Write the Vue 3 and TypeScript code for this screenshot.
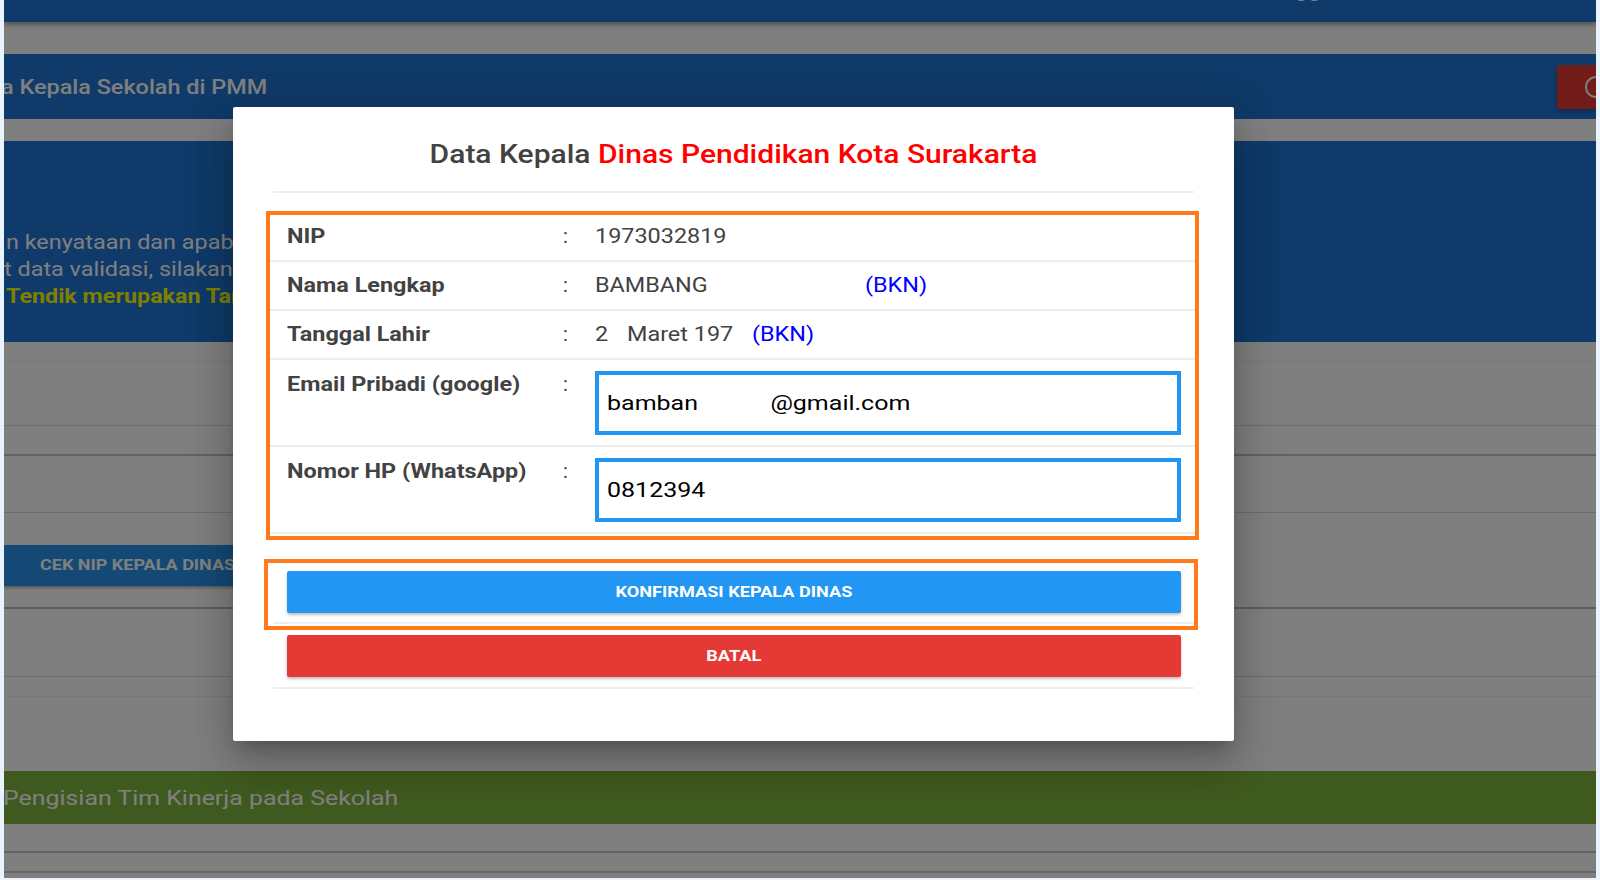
<script setup lang="ts">
import { ref } from 'vue'

const email = ref('bamban\u00a0\u00a0\u00a0\u00a0\u00a0\u00a0\u00a0\u00a0\u00a0\u00a0\u00a0\u2006@gmail.com')
const phone = ref('0812394')
</script>

<template>
  <div class="frame">
    <div class="page">
      <header class="topbar"><span class="topbar-text">gg</span></header>
      <section class="bar title-bar">
        <h2 class="bar-title">a Kepala Sekolah di PMM</h2>
        <button class="help-btn" type="button">
          <svg width="24" height="24" viewBox="0 0 24 24" fill="none" stroke="#fff" stroke-width="2">
            <path d="M15 2.5A10 10 0 1 0 22 12" />
            <path d="M12 7a4 4 0 0 1 3 6.5L12 16" />
          </svg>
        </button>
      </section>
      <section class="bar notice">
        <p class="wide">n kenyataan dan apabila</p>
        <p class="wide">t data validasi, silakan</p>
        <p class="wide notice-strong">Tendik merupakan Tanggung</p>
      </section>
      <div class="rows">
        <div class="row r1"></div>
        <div class="row r2"></div>
        <div class="row r3"></div>
        <div class="row r4"></div>
        <div class="check-wrap">
          <button class="check-btn" type="button"><span class="wide">CEK NIP KEPALA DINAS</span></button>
        </div>
        <div class="row r5"></div>
        <div class="row r6"></div>
      </div>
      <section class="green"><span class="wide">Pengisian Tim Kinerja pada Sekolah</span></section>
      <div class="row r8"></div>
      <div class="row r9"></div>
    </div>

    <div class="scrim"></div>

    <div class="modal">
      <h1 class="modal-title">Data Kepala <span class="red">Dinas Pendidikan Kota Surakarta</span></h1>
      <hr class="rule" />

      <div class="table-box">
        <div class="t-row h-49 first">
          <span class="t-label wide">NIP</span><span class="t-colon">:</span>
          <span class="t-value wide">1973032819</span>
        </div>
        <div class="t-row h-49">
          <span class="t-label wide">Nama Lengkap</span><span class="t-colon">:</span>
          <span class="t-value">
            <span class="wide name-part">BAMBANG</span><span class="wide bkn">(BKN)</span>
          </span>
        </div>
        <div class="t-row h-49">
          <span class="t-label wide">Tanggal Lahir</span><span class="t-colon">:</span>
          <span class="t-value">
            <span class="wide day-part">2</span><span class="wide month-part">Maret 197</span><span class="wide bkn">(BKN)</span>
          </span>
        </div>
        <div class="t-row h-87">
          <span class="t-label wide">Email Pribadi (google)</span><span class="t-colon">:</span>
          <div class="t-input"><input v-model="email" type="text" /></div>
        </div>
        <div class="t-row h-87">
          <span class="t-label wide">Nomor HP (WhatsApp)</span><span class="t-colon">:</span>
          <div class="t-input"><input v-model="phone" type="text" /></div>
        </div>
      </div>

      <div class="actions">
        <div class="action-highlight"></div>
        <button class="btn blue" type="button"><span class="btn-text">KONFIRMASI KEPALA DINAS</span></button>
        <hr class="rule" />
        <button class="btn danger" type="button"><span class="btn-text">BATAL</span></button>
        <hr class="rule" />
      </div>
    </div>
  </div>
</template>

<style>
html, body { margin: 0; padding: 0; background: #e9f3fd; }
</style>

<style scoped>
* { box-sizing: border-box; }
.frame {
  position: relative;
  width: 1592px;
  height: 878px;
  margin: 0 4px;
  overflow: hidden;
  font-family: Roboto, "Liberation Sans", sans-serif;
}
.wide {
  display: inline-block;
  transform: scaleX(1.17);
  transform-origin: left center;
  white-space: nowrap;
}
.page { height: 878px; background: #fff; overflow: hidden; }
.topbar {
  height: 22px;
  background: #1e75d2;
  box-shadow: 0 2px 6px rgba(0, 0, 0, .45);
  overflow: hidden;
  padding-left: 1291px;
  position: relative;
}
.topbar-text {
  display: block;
  margin-top: -22px;
  color: #fff;
  font-size: 22px;
  line-height: 22px;
  letter-spacing: 1px;
}
.bar { background: #1e75d2; color: #fff; }
.title-bar {
  margin-top: 32px;
  height: 65px;
  display: flex;
  align-items: center;
  justify-content: space-between;
  overflow: hidden;
}
.bar-title {
  margin: 0 0 0 -3px;
  font-size: 21px;
  font-weight: 500;
  transform: scaleX(1.115);
  transform-origin: left center;
}
.help-btn {
  width: 90px;
  height: 44px;
  margin-right: -51px;
  padding: 0 0 0 27px;
  border: 0;
  border-radius: 3px;
  background: #e53935;
  display: flex;
  align-items: center;
  box-shadow: 0 2px 4px rgba(0, 0, 0, .3);
}
.notice {
  margin-top: 22px;
  height: 201px;
  padding-top: 88px;
  overflow: hidden;
  white-space: nowrap;
}
.notice p {
  display: block;
  margin: 0 0 0 2px;
  font-size: 20px;
  line-height: 27px;
}
.notice p:nth-child(2) { margin-left: 0; }
.notice p.notice-strong {
  margin-left: 2px;
  color: #ff0;
  font-weight: 700;
  transform: scaleX(1.166);
}
.rows { height: 429px; }
.row { border-bottom: 1px solid #ddd; }
.r1 { height: 20px; border-color: #f2f2f2; }
.r2 { height: 64px; }
.r3 { height: 30px; border-color: #c4c4c4; border-bottom-width: 2px; }
.r4 { height: 57px; }
.check-wrap { height: 96px; padding-top: 32px; border-bottom: 2px solid #bdbdbd; }
.check-btn {
  width: 300px;
  height: 41px;
  padding: 0 0 2px 36px;
  border: 0;
  text-align: left;
  background: #2892ea;
  color: #fff;
  font: 700 15px Roboto, "Liberation Sans", sans-serif;
  box-shadow: 0 2px 3px rgba(0, 0, 0, .3);
  white-space: nowrap;
  overflow: hidden;
}
.check-btn .wide { transform: scaleX(1.2); }
.r5 { height: 68px; }
.r6 { height: 20px; border-color: #f0f0f0; }
.green {
  height: 53px;
  background: #7eb53f;
  color: #fff;
  font-size: 21px;
  line-height: 54px;
  white-space: nowrap;
}
.green .wide { margin-left: -1px; transform: scaleX(1.185); }
.r8 { height: 29px; border-bottom: 2px solid #c4c4c4; }
.r9 { height: 20px; border-bottom: 2px solid #ccc; }
.scrim { position: absolute; inset: 0; background: rgba(0, 0, 0, .5); }

.modal {
  position: absolute;
  left: 229px;
  top: 107px;
  width: 1001px;
  height: 634px;
  padding: 0 40px;
  background: #fff;
  border-radius: 2px;
  box-shadow: 0 24px 38px 3px rgba(0, 0, 0, .14), 0 9px 46px 8px rgba(0, 0, 0, .12), 0 11px 15px -7px rgba(0, 0, 0, .2);
  color: #424242;
}
.modal-title {
  margin: 0;
  height: 84px;
  padding-top: 33px;
  text-align: center;
  font-size: 25px;
  line-height: 30px;
  font-weight: 500;
  color: #424242;
  transform: scaleX(1.2);
}
.red { color: #ff0000; }
.rule { margin: 0; height: 2px; border: 0; background: #eee; }
.table-box {
  margin: 18px -5px 0 -7px;
  height: 329px;
  border: 4px solid #ff7a1a;
}
.t-row {
  display: grid;
  grid-template-columns: 276px 32px 586px;
  padding-left: 17px;
  border-bottom: 2px solid #eee;
  align-items: start;
}
.h-49 { height: 49px; padding-top: 10px; }
.first { height: 47px; padding-top: 8px; }
.h-87 { height: 87px; padding-top: 10px; }
.h-87 .t-label, .h-87 .t-colon { margin-top: 1px; }
.t-label, .t-value, .t-colon {
  font-size: 20px;
  line-height: 26px;
  white-space: nowrap;
}
.t-label { font-weight: 700; }
.name-part { width: 270px; }
.day-part { width: 31.5px; }
.month-part { width: 125.5px; }
.bkn { color: #0000ff; }
.t-input {
  width: 586px;
  height: 64px;
  margin-top: 1px;
  padding-left: 8px;
  border: 4px solid #2196f3;
  background: #fff;
  overflow: hidden;
}
.t-input input {
  display: block;
  width: 480px;
  height: 56px;
  padding: 0;
  border: 0;
  outline: 0;
  background: transparent;
  color: #000;
  font: 400 21px Roboto, "Liberation Sans", sans-serif;
  transform: scaleX(1.19);
  transform-origin: left center;
}
.actions {
  position: relative;
  margin-top: 31px;
}
.action-highlight {
  position: absolute;
  left: -9px;
  right: -4px;
  top: -12px;
  height: 71px;
  border: 4px solid #ff7a1a;
}
.btn {
  display: block;
  width: 894px;
  height: 42px;
  margin-left: 14px;
  border: 0;
  border-radius: 2px;
  color: #fff;
  font: 700 15px Roboto, "Liberation Sans", sans-serif;
  box-shadow: 0 2px 3px rgba(0, 0, 0, .25);
}
.btn-text { display: inline-block; transform: scaleX(1.21); }
.actions .rule:nth-of-type(1) { margin-top: 9px; }
.blue { background: #2196f3; }
.danger { background: #e53935; margin-top: 11px; }
.danger + .rule { margin-top: 10px; }
</style>
